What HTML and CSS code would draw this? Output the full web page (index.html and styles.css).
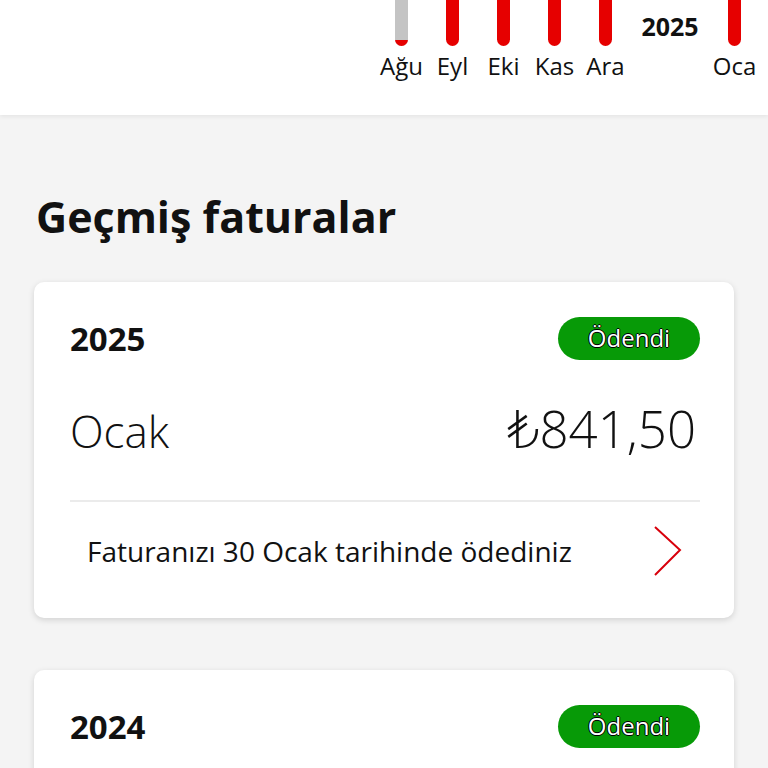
FILE: index.html
```html
<!DOCTYPE html>
<html lang="tr">

<head>
    <meta charset="UTF-8">
    <meta name="viewport" content="width=device-width, initial-scale=1.0">
    <title>Faturalarım</title>
    <link rel="stylesheet" href="styles.css">
</head>

<body>
    <div class="usage">
        <div class="chart">
            <div class="month">
                <div class="bar bar-empty"><span class="bar-fill"></span></div>
                <span class="month-label">Ağu</span>
            </div>
            <div class="month">
                <div class="bar"></div>
                <span class="month-label">Eyl</span>
            </div>
            <div class="month">
                <div class="bar"></div>
                <span class="month-label">Eki</span>
            </div>
            <div class="month">
                <div class="bar"></div>
                <span class="month-label">Kas</span>
            </div>
            <div class="month">
                <div class="bar"></div>
                <span class="month-label">Ara</span>
            </div>
            <div class="year-mark">2025</div>
            <div class="month">
                <div class="bar"></div>
                <span class="month-label">Oca</span>
            </div>
        </div>
    </div>

    <main class="history">
        <h2 class="history-title">Geçmiş faturalar</h2>

        <section class="bill-card">
            <div class="bill-head">
                <span class="bill-year">2025</span>
                <span class="status">Ödendi</span>
            </div>
            <div class="bill-amount-row">
                <span class="bill-month">Ocak</span>
                <span class="bill-amount">₺841,50</span>
            </div>
            <div class="bill-foot">
                <span class="bill-note">Faturanızı 30 Ocak tarihinde ödediniz</span>
                <svg class="chevron" width="28" height="50" viewBox="0 0 28 50">
                    <path d="M1 1 L26 24 L1 49" fill="none" stroke="#d8000b" stroke-width="2" />
                </svg>
            </div>
        </section>

        <section class="bill-card bill-card-last">
            <div class="bill-head">
                <span class="bill-year">2024</span>
                <span class="status">Ödendi</span>
            </div>
        </section>
    </main>
</body>

</html>
```

FILE: styles.css
```css
body {
    margin: 0;
    height: 768px;
    overflow: hidden;
    background-color: #f4f4f4;
    font-family: "Open Sans", "DejaVu Sans", sans-serif;
    color: #111;
}
.usage {
    background-color: #ffffff;
    height: 115px;
    box-shadow: 0 2px 4px rgba(0, 0, 0, 0.06);
}
.chart {
    display: flex;
    justify-content: flex-end;
    padding-right: 8px;
}
.month {
    width: 51px;
    display: flex;
    flex-direction: column;
    align-items: center;
}
.bar {
    width: 13px;
    height: 46px;
    background-color: #e60000;
    border-radius: 0 0 7px 7px;
    display: flex;
    align-items: flex-end;
    overflow: hidden;
}
.bar-empty {
    background-color: #c4c4c4;
}
.bar-fill {
    display: block;
    width: 100%;
    height: 6px;
    background-color: #e60000;
}
.month-label {
    font-size: 24px;
    line-height: 30px;
    margin-top: 5px;
}
.year-mark {
    width: 78px;
    text-align: center;
    font-size: 25px;
    font-weight: bold;
    line-height: 30px;
    padding-top: 11px;
}
.history {
    padding: 0 34px;
}
.history-title {
    margin: 0;
    padding: 74px 0 38px 2px;
    font-size: 43px;
    line-height: 55px;
    font-weight: bold;
}
.bill-card {
    background-color: #ffffff;
    border-radius: 10px;
    box-shadow: 0 2px 6px rgba(0, 0, 0, 0.14);
    padding: 34px 34px 42px 36px;
    margin-bottom: 52px;
}
.bill-card-last {
    padding-bottom: 80px;
}
.bill-head {
    display: flex;
    justify-content: space-between;
    align-items: center;
}
.bill-year {
    font-size: 33px;
    font-weight: bold;
}
.status {
    background-color: #079a07;
    color: #ffffff;
    border-radius: 22px;
    width: 142px;
    height: 43px;
    line-height: 41px;
    text-align: center;
    font-size: 24px;
    text-shadow: -1px 0 #000, 1px 0 #000, 0 -1px #000, 0 1px #000;
}
.bill-amount-row {
    display: flex;
    justify-content: space-between;
    align-items: baseline;
    padding: 37px 0 39px;
    border-bottom: 2px solid #ebebeb;
}
.bill-month {
    font-size: 44px;
    font-weight: 300;
    line-height: 60px;
}
.bill-amount {
    font-size: 51px;
    font-weight: 300;
    line-height: 60px;
    padding-right: 4px;
}
.bill-foot {
    display: flex;
    justify-content: space-between;
    align-items: center;
    padding: 24px 18px 0 17px;
}
.bill-note {
    font-size: 28px;
}
```
